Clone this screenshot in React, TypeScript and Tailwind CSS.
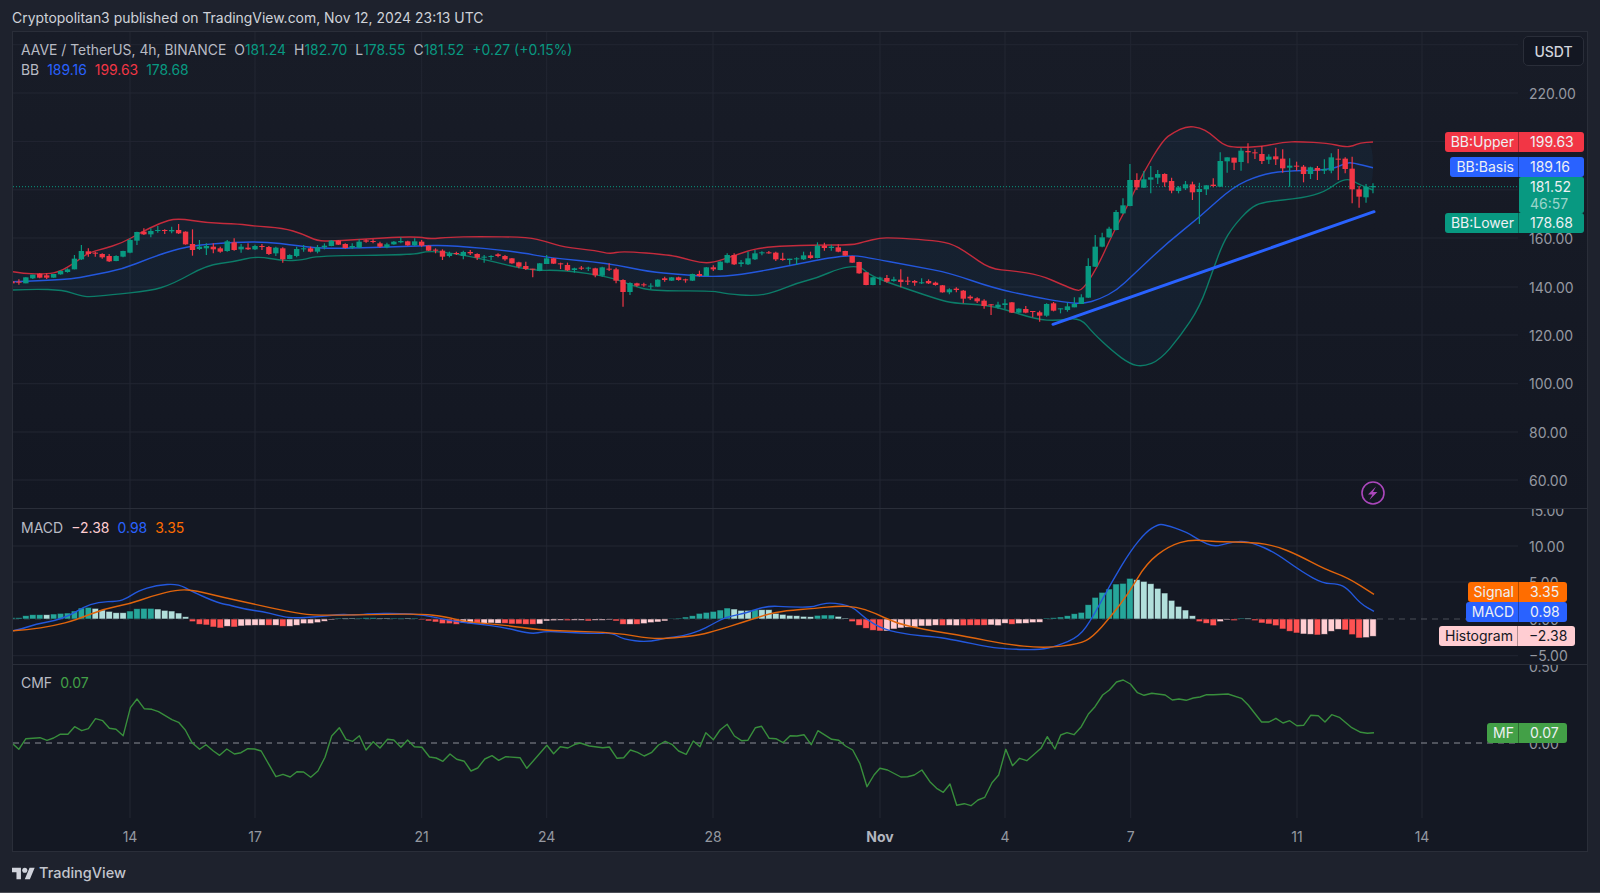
const GREEN = "#089981";
const RED = "#f23645";
const BLUE = "#2962ff";

// candles read off the chart: colour, wick top, body top, body bottom, wick bottom
// y values are 3x pixels measured from the base of each block
const candleBlocks: [number, number, string][] = [
  [200, -17, "r 242 244 250 254,r 238 245 248 254,g 232 232 250 250,g 224 224 235 237,r 219 221 233 235,r 220 226 233 237,g 222 222 233 233,g 211 213 223 224,g 205 208 216 218,g 165 176 208 208,g 135 153 178 180,r 145 154 162 170,r 155 158 160 170,r 160 162 172 176,r 162 168 184 186,g 166 168 183 184,g 152 153 170 172,g 115 120 158 160,g 95 96 122 135,r 85 95 103 105,g 85 93 103 112,g 78 90 93 98,r 88 90 93 102,g 80 90 94 100,r 72 90 100 102,r 94 95 133 134,r 88 132 150 167,g 120 140 147 150,g 130 138 145 165,r 130 140 148 160,r 140 145 155 158,g 120 124 153 155,r 115 127 150 152,g 132 140 148 158,r 130 143 148 150,g 134 138 148 150,r 132 138 140 150,r 138 141 162 165,g 140 143 160 168,r 142 145 178 188,g 163 165 177 178,g 140 147 168 172,g 135 145 147 155,r 140 145 155 157,g 135 142 155 160,g 130 137 142 148,g 120 122 138 139,r 120 122 134 135,r 130 132 144 146,g 130 138 143 147,g 118 125 143 145,r 118 121 125 128,r 118 123 126 130,r 125 130 140 143,g 128 133 142 145,g 123 125 133 134,g 112 123 127 130,r 122 124 136 137,g 115 124 136 138,r 120 125 137 140,r 136 137 152 153,r 145 149 152 160,r 148 152 170 180"],
  [220, 46, "g 95 100 108 112,r 95 99 102 105,g 92 96 108 118,r 90 96 100 105,r 100 102 113 120,g 105 110 113 128,g 106 108 111 120,r 100 103 108 112,r 105 108 118 122,r 114 115 130 131,r 125 127 140 145,r 125 138 147 150,r 146 146 149 172,g 129 130 153 154,g 105 115 132 132,r 114 115 131 132,r 128 130 133 147,r 128 135 151 153,g 143 145 150 158,r 138 143 146 150,g 140 143 146 153,r 143 145 166 172,g 140 142 167 170,r 130 146 149 153,r 143 148 182 190,r 178 180 216 260,g 187 189 216 225,r 188 190 197 200,r 188 193 196 200,g 190 197 200 207,g 178 179 200 201,r 170 175 180 185,g 171 172 182 183,r 170 172 180 182,r 176 178 181 188,g 161 162 182 183,r 152 162 168 170,g 141 142 168 169,r 136 142 148 153,g 124 125 150 151,g 100 105 128 130,r 100 105 133 135,g 120 127 132 140,g 95 115 133 135,g 90 100 118 120,g 94 97 100 106,r 93 97 100 101,r 95 98 118 123,r 98 116 120 122,g 116 116 120 134,g 112 115 117 135,g 95 106 118 120,r 95 106 114 116,g 67 77 114 115,r 68 77 84 92,g 74 80 84 92,r 73 82 95 97,r 92 93 107 108"],
  [230, 104, "r 77 78 98 99,r 95 96 130 131,r 126 127 165 166,g 141 142 165 166,g 140 143 146 165,r 135 144 155 158,g 140 148 153 155,r 118 149 156 172,r 140 152 155 165,r 150 153 158 167,g 145 157 160 162,r 148 153 160 162,r 155 158 165 167,r 165 166 187 188,g 175 178 187 193,r 172 176 180 187,r 180 182 206 220,r 196 200 205 210,r 202 205 214 219,r 208 212 228 236,r 222 223 226 255,g 215 224 232 236,g 207 220 225 237,r 216 217 248 249,g 235 236 248 249,r 228 237 248 250,r 243 243 246 262,r 242 247 257 275,g 220 222 257 260,r 216 220 242 244,g 235 235 238 250,g 218 229 240 245,g 202 222 232 232,g 193 202 222 222"],
  [110, 138, "g 445 468 563 564,g 375 410 470 471,g 368 382 410 412,g 350 356 382 383,g 300 306 360 361,g 265 286 310 312,g 162 210 288 289,r 190 210 232 240,g 183 208 233 234,g 168 202 209 250,g 180 192 203 222,r 190 192 217 230,r 203 213 242 250,g 228 232 243 250,g 213 223 235 240,r 215 223 247 270,g 218 237 246 342,g 226 226 238 255,r 205 224 228 232,g 127 153 230 231,g 142 142 154 188,r 143 143 158 180,g 113 122 156 182,r 100 123 127 160,r 118 127 130 147,r 108 132 153 162,g 133 140 149 162,r 113 139 148 165,r 118 146 175 188,g 145 167 173 230,r 155 167 170 182,r 165 170 192 217,g 170 172 192 207,r 168 174 182 210,g 148 177 182 192,g 130 142 182 190,r 117 146 148 210,r 142 146 177 190,r 140 176 238 280,r 228 238 260 293,g 222 230 262 278,g 220 228 232 250"],
];

const candles = candleBlocks.flatMap(([base, k0, rows]) =>
  rows.split(",").map((row, i) => {
    const [c, hi, top, bot, lo] = row.split(" ");
    return {
      x: 130 + 6.944 * (k0 + i),
      up: c === "g",
      hi: base + +hi / 3,
      top: base + +top / 3,
      bot: base + +bot / 3,
      lo: base + +lo / 3,
    };
  }),
);

// round the corners of a hand-read line: quadratic curves through the midpoints
function smooth(points: string) {
  const p = points.split(" ").map((s) => s.split(",").map(Number));
  let d = `M${p[0][0]} ${p[0][1]}`;
  for (let i = 1; i < p.length - 1; i++) {
    const mx = (p[i][0] + p[i + 1][0]) / 2;
    const my = (p[i][1] + p[i + 1][1]) / 2;
    d += `Q${p[i][0]} ${p[i][1]} ${mx} ${my}`;
  }
  const last = p[p.length - 1];
  return d + `L${last[0]} ${last[1]}`;
}

const bbUpper =
  "13,271.7 23,273.7 47,274 60,271.7 75,262.7 88,252.7 103,249 122,243 140,233 160,223 177,218 207,223 240,224 253,226 283,228 303,234 317,241 333,241 367,239 400,237 420,237 430,239 450,237 477,236.7 527,237 547,241.7 563,247 597,250.7 610,254 622,251 670,255 683,258 700,262.7 713,262.7 733,256 760,247 813,245 853,245 863,242 880,238 893,237.7 927,240 950,242.7 967,252.7 990,269 1013,270.7 1040,275 1063,285 1075,290 1082,290.7 1097,268 1113,233 1127,207 1143,173 1163,140 1173,132.7 1187,126 1200,127.7 1210,133 1222,144 1233,147.7 1263,146.7 1283,142 1300,141.7 1327,143 1345,147 1353,146 1360,142.7 1373,142";
const bbBasis =
  "13,281.7 67,280 93,275 123,269 150,258 180,248 207,244 260,241 300,246 327,249 417,246 450,245 517,251.7 550,258 607,263 650,272 677,274 710,277 740,275 783,267 833,257 853,255.5 863,256.7 917,266.7 950,273 993,288 1033,296.7 1063,302 1083,304 1100,299 1117,290 1133,275 1167,243 1200,216.7 1233,186.7 1260,175 1283,171 1330,170 1347,162.7 1353,162.7 1373,167.7";
const bbLower =
  "13,290 33,289 63,290 80,295.7 90,297 110,294.7 150,291 173,284 207,265 233,262 257,256 283,261 303,260 317,255.7 413,255 427,251 450,252.7 483,259 530,270.7 563,270 610,276.7 633,286 653,291 713,290.7 727,294 755,296 773,292.7 797,283 817,278 840,268 860,265.7 870,276 907,289 940,300 953,303 983,305 1000,308 1037,319.5 1057,320.7 1080,317.3 1093,333 1113,351.7 1130,364 1143,366.7 1160,360 1180,336.7 1200,306.7 1213,270 1223,243 1233,226.7 1250,208 1263,202 1303,198 1325,191.7 1340,180.7 1350,179 1358,184 1373,190";
const bbFill = bbUpper + " " + bbLower.split(" ").reverse().join(" ");

const macdLine =
  "13,630.7 22,629 36,624 54,621 71,615 83,607.3 98,602 118,601.3 127,598.3 138,591 156,585.3 178,583.7 192,591.7 219,603.3 228,604.7 245.5,609.3 263,611.7 277,615 290,618.3 321,616.7 339,614.3 357,615 370,613.7 397,613.3 424,614.7 451,621 478,624 504,627.3 531,634.3 545,631.3 567,632.3 594,633.7 612,632.7 623,639.3 647,642.3 670,637.3 683,636 700,630.7 711,625 722,619 731,616 745,613.3 767,605.7 789,607 812,607.3 820.5,604 832,602.7 852,606 865,618.3 883,629.3 910,635 937,637 954.5,640 990,647.3 1008,649 1039,650 1057,646 1079.5,636.7 1093,616.7 1111,583.3 1131,550 1146.4,531.7 1157.6,524.7 1164,524.3 1186.6,532 1200,540.7 1214,547 1229,542.7 1242,541 1253.6,543.3 1273.7,551.7 1302.7,572.3 1322.8,583.3 1338.4,584 1347.3,588.3 1360.7,604 1374,611.3";
const signalLine =
  "13,630.7 27,630 54,625.7 76,620 103,609 129.5,604 152,596 178.6,589.3 196,590.7 223,597.3 254.5,604.3 290,612 312.5,615.3 352.7,615 420,613.7 446,616.7 464,621.7 504.5,625 540,630 567,631 616,632.7 652,639 674,638 700,635 718,630 744.6,621.7 767,614.3 785,610.7 816,608.3 838,606 856,606.7 874,612.7 896.4,623.3 923,629.3 968,636.7 1003.6,644 1043.8,648.3 1079.5,644 1093,636.7 1110.7,616.7 1128.6,593.3 1146.4,563.3 1168.8,546 1191,539.3 1213.4,541.7 1253.6,542.3 1276,546 1298,555 1325,569.3 1347.3,577.3 1374,594.3";

// histogram, one per candle from k=-17: d dark teal, l light teal, r red, p pink (3x px)
const hist =
  "d4 d4 d10 d13 d13 l13 d15 d17 d18 d24 d33 d35 l32 l27 l23 l19 l19 d24 d31 d32 d32 l30 l26 l24 l18 l7 r-8 r-16 r-18 r-24 r-27 p-22 r-24 p-21 p-20 p-19 p-19 r-19 p-19 r-22 p-22 p-19 p-14 p-14 p-11 p-7 p-3 d3 l3 l3 d3 d4 d4 l3 l3 d3 d3 l3 d3 r-3 r-6 r-9 r-14 r-14 r-16 p-11 p-13 r-14 p-13 p-12 p-13 r-13 r-15 r-15 r-16 r-16 p-15 p-6 p-5 p-4 r-5 p-4 p-4 r-6 p-4 p-4 p-3 r-6 r-16 p-16 r-16 p-14 p-11 p-9 p-6 d2 d3 d6 d10 d17 d20 d23 d27 d33 l30 l26 l26 d28 l28 l28 l17 l14 l11 l10 l8 l7 d11 d12 d12 l8 l3 r-8 r-19 r-28 r-34 r-36 p-36 p-30 p-27 p-25 p-24 p-21 p-21 p-19 r-20 p-19 p-20 r-20 r-19 r-19 r-19 p-18 p-20 p-13 r-16 p-14 p-13 p-11 p-10 d3 d4 d6 d10 d16 d20 d43 d65 d80 d90 d105 d107 d122 l118 l113 l106 l92 l78 l56 l38 l27 l10 r-8 r-13 r-20 p-8 p-3 r-5 d3 l3 r-5 r-12 r-15 r-20 r-30 r-37 r-42 p-45 p-46 r-48 p-46 p-37 p-31 r-33 r-47 r-57 p-56 p-52"
    .split(" ")
    .map((s, i) => ({ x: 130 + 6.944 * (i - 17), type: s[0], h: +s.slice(1) / 3 }));

const histColor: Record<string, string> = { d: "#26a69a", l: "#b2dfdb", r: "#ff5252", p: "#ffcdd2" };

const cmfLine =
  "13,744 18.8,749.3 25.9,738.7 40,737.7 47,740.3 53.6,738 60,734.3 67.9,734.3 74.6,726.7 81.7,730.7 88.4,728.7 95.5,718.7 102.7,720.7 109.4,728.3 116,729.3 123.2,735.7 130.4,707.7 137,699 144.2,708.7 151.8,709.3 158.5,711.7 171.9,719.7 178.6,722.3 185.3,730 192,742.7 199.6,749.3 206,744.7 213.4,751 219.6,755.3 226.8,749 234.4,754 241,752.7 247.8,748.7 254.5,749 261.2,751 275.9,776.7 283,774.3 290.2,777 296.9,771.7 303.6,772 310.7,777.3 317.9,771 325,757.3 331.7,736 339.3,727.7 346,739.3 352.7,741.3 359.4,735.7 366,750 373.2,741.7 380,748 387.5,739.3 393.8,740 400.9,747.3 407.6,740 414.3,746.7 421.9,747.3 429.5,757 436.2,758 442.9,761.3 450,754 456.7,759.3 464.3,761.3 471,771 477.7,768 484.8,759 492,755.7 498.7,760.3 505.8,756.7 520,757.7 526.8,768.3 546.9,745.3 553.6,753.7 560.3,746.7 567.9,748 575,744.3 580.4,743 589.3,746 602.7,747.7 609.4,747 617,758.3 623.7,757.7 630.4,750 637.5,752.3 644.2,756 651.8,752.3 658.5,745 665.2,741.3 671.9,744.3 678.6,751 686.2,754.3 693.3,741 700,746.7 705.8,732.7 713.4,739.7 720,730 727.2,724.3 734.4,736 741.5,740.7 747.8,740.3 755.4,727.7 761.6,726.3 769.2,738.3 775.9,738.7 783,742.7 790.2,735.7 796.9,736 804,734.7 811.2,744.7 817.9,730.7 831.7,739.3 838.8,740.3 845.5,746 852.7,750 859.8,763.3 867,786.7 874,775 879.9,768.3 887.5,770 900.9,777 907.6,776.7 914.3,775 921.9,770 929.9,781.7 936.6,788.3 943.3,792.3 950,784 956.7,805.3 964.3,803.7 971,805.7 978,800 984.8,797.3 992,782.7 998.7,775 1005.8,749.3 1012.5,765.7 1019.6,758.3 1026.8,760.7 1041,748.3 1047.3,736.7 1054.9,749 1060.7,735 1067,732.7 1074,734.7 1081.3,726.7 1088.4,714 1095,706.7 1102.7,695 1109.4,690 1116.5,682 1123.2,680 1130.4,684 1137.5,692.7 1144,695.3 1151.8,693.3 1165.2,695 1172.3,700 1179,699 1186.2,700.3 1193.3,698 1200,697 1206.7,694.7 1213.4,694.7 1228,694 1241.5,698.3 1248.2,705 1261.6,722 1269,722 1275.9,718.3 1283,723 1289.7,720.7 1296.9,725.7 1303.6,725.3 1310.7,715.3 1318.3,715.7 1325,722 1331.7,714.7 1339.3,717.3 1351.8,727.7 1360.7,732.3 1367.4,733.3 1374,732.7";

const dayLines = [130, 255, 421.7, 546.7, 713, 880, 1005, 1130.7, 1297, 1422];
const timeLabels = [
  { x: 130, text: "14" },
  { x: 255, text: "17" },
  { x: 421.7, text: "21" },
  { x: 546.7, text: "24" },
  { x: 713, text: "28" },
  { x: 880, text: "Nov", bold: true },
  { x: 1005, text: "4" },
  { x: 1130.7, text: "7" },
  { x: 1297, text: "11" },
  { x: 1422, text: "14" },
];

const GRID = "#222632";

type Tick = { y: number; text?: string };

function Pane({
  top,
  height,
  ticks,
  lines,
  children,
  overlay,
}: {
  top: number;
  height: number;
  ticks: Tick[];
  lines?: number[];
  children: React.ReactNode;
  overlay?: React.ReactNode;
}) {
  return (
    <div className="relative flex overflow-hidden" style={{ height }}>
      <svg width={1505} height={height} viewBox={`13 ${top} 1505 ${height}`} className="shrink-0">
        {dayLines.map((x) => (
          <line key={x} x1={x} x2={x} y1={top} y2={top + height} stroke={GRID} strokeWidth={1} />
        ))}
        {(lines ?? ticks.map((t) => t.y)).map((y) => (
          <line key={y} x1={13} x2={1518} y1={y} y2={y} stroke={GRID} strokeWidth={1} />
        ))}
        {children}
      </svg>
      <div className="relative flex-1">
        {ticks.map(
          (t) =>
            t.text && (
              <span
                key={t.text}
                className="absolute left-[11px] text-[14px] leading-[20px] text-[#9598a1]"
                style={{ top: t.y - top - 9.5 }}
              >
                {t.text}
              </span>
            ),
        )}
      </div>
      {overlay}
    </div>
  );
}

function Tag({
  top,
  right,
  label,
  value,
  valueWidth,
  bg,
  dark,
}: {
  top: number;
  right: number;
  label: string;
  value: string;
  valueWidth: number;
  bg: string;
  dark?: boolean;
}) {
  return (
    <div
      className={`absolute flex h-[20px] rounded-[3px] text-[14px] leading-[20px] ${dark ? "text-[#131722]" : "text-[#eef0f4]"}`}
      style={{ top, right, backgroundColor: bg }}
    >
      <span className="border-r border-black/30 pl-[6px] pr-[4px]">{label}</span>
      <span className="pl-[11px]" style={{ width: valueWidth }}>
        {value}
      </span>
    </div>
  );
}

export default function App() {
  return (
    <div className="flex h-[893px] w-[1600px] flex-col overflow-hidden bg-[#1e222d] font-[Inter,sans-serif] text-[#b8bbc4]">
      {/* published by line */}
      <div className="flex h-[31px] shrink-0 items-center pl-[12px] pt-[5px] text-[13.95px] text-[#cfd2d9]">
        Cryptopolitan3 published on TradingView.com, Nov 12, 2024 23:13 UTC
      </div>

      {/* chart frame */}
      <div className="relative mx-[12px] h-[821px] shrink-0 border border-[#2a2e39] bg-[#141823]">
        {/* price pane */}
        <div className="border-b border-[#2a2e39] bg-gradient-to-b from-[#181c27] to-[#131722]">
          <Pane
            top={32}
            height={476}
            ticks={[
              { y: 44.7 },
              { y: 93, text: "220.00" },
              { y: 141.4 },
              { y: 189.8 },
              { y: 238, text: "160.00" },
              { y: 287, text: "140.00" },
              { y: 335, text: "120.00" },
              { y: 383.7, text: "100.00" },
              { y: 432, text: "80.00" },
              { y: 480, text: "60.00" },
            ]}
            overlay={
              <>
                <div className="absolute left-[8px] top-[8px] text-[13.9px] leading-[20px]">
                  <div className="flex">
                    <span>AAVE / TetherUS, 4h, BINANCE</span>
                    <span className="ml-[8px]">O</span>
                    <span className="text-[#089981]">181.24</span>
                    <span className="ml-[8px]">H</span>
                    <span className="text-[#089981]">182.70</span>
                    <span className="ml-[8px]">L</span>
                    <span className="text-[#089981]">178.55</span>
                    <span className="ml-[8px]">C</span>
                    <span className="text-[#089981]">181.52</span>
                    <span className="ml-[8px] text-[#089981]">+0.27 (+0.15%)</span>
                  </div>
                  <div className="flex gap-[8px]">
                    <span>BB</span>
                    <span className="text-[#2962ff]">189.16</span>
                    <span className="text-[#f23645]">199.63</span>
                    <span className="text-[#089981]">178.68</span>
                  </div>
                </div>
                <div className="absolute right-[3px] top-[4px] flex h-[30px] w-[61px] items-center justify-center rounded-[5px] border border-[#2a2e39] bg-[#131722] text-[14px] font-medium text-[#d1d4dc]">
                  USDT
                </div>
              </>
            }
          >
            <path d={smooth(bbFill)} fill="#2196f3" fillOpacity={0.06} />
            <path d={smooth(bbUpper)} fill="none" stroke="#c42b3c" strokeWidth={1.4} />
            <path d={smooth(bbBasis)} fill="none" stroke="#2357dd" strokeWidth={1.4} />
            <path d={smooth(bbLower)} fill="none" stroke="#0c7c68" strokeWidth={1.4} />
            <line x1={13} x2={1518} y1={186.7} y2={186.7} stroke={GREEN} strokeWidth={1} strokeDasharray="1 2" />
            {candles.map((c) => (
              <g key={c.x} fill={c.up ? GREEN : RED} stroke={c.up ? GREEN : RED}>
                <line x1={c.x} x2={c.x} y1={c.hi} y2={c.lo} strokeWidth={1.2} />
                <rect x={c.x - 2.7} y={c.top} width={5.4} height={Math.max(c.bot - c.top, 1)} stroke="none" />
              </g>
            ))}
            <line x1={1053} y1={324.3} x2={1374} y2={211.7} stroke={BLUE} strokeWidth={3} strokeLinecap="round" />
            <circle cx={1373} cy={493} r={11} fill="none" stroke="#ab47bc" strokeWidth={1.6} />
            <path d="M1376 486.5 l-8 8 h4.4 l-3 5.5 l8 -8 h-4.4 z" fill="#ab47bc" />
          </Pane>
        </div>

        {/* macd pane */}
        <div className="border-b border-[#2a2e39]">
          <Pane
            top={509}
            height={155}
            ticks={[
              { y: 510, text: "15.00" },
              { y: 546, text: "10.00" },
              { y: 582, text: "5.00" },
              { y: 619, text: "0.00" },
              { y: 655.7, text: "−5.00" },
            ]}
            lines={[546, 582, 655.7]}
            overlay={
              <div className="absolute left-[8px] top-[9px] flex gap-[8px] text-[14px] leading-[20px]">
                <span>MACD</span>
                <span className="text-[#ffcdd2]">−2.38</span>
                <span className="text-[#2962ff]">0.98</span>
                <span className="text-[#ff6d00]">3.35</span>
              </div>
            }
          >
            <line x1={13} x2={1518} y1={619} y2={619} stroke="#4a4e59" strokeWidth={1} strokeDasharray="6 5" />
            {hist.map((b) => (
              <rect
                key={b.x}
                x={b.x - 3.2}
                y={b.h > 0 ? 619 - b.h : 619}
                width={6.4}
                height={Math.abs(b.h)}
                fill={histColor[b.type]}
                stroke="#131722"
                strokeOpacity={0.7}
                strokeWidth={0.8}
              />
            ))}
            <path d={smooth(macdLine)} fill="none" stroke="#2358dd" strokeWidth={1.4} />
            <path d={smooth(signalLine)} fill="none" stroke="#e0640c" strokeWidth={1.4} />
          </Pane>
        </div>

        {/* cmf pane */}
        <Pane
          top={665}
          height={153}
          ticks={[
            { y: 666.7, text: "0.50" },
            { y: 743, text: "0.00" },
          ]}
          lines={[]}
          overlay={
            <div className="absolute left-[8px] top-[8px] flex gap-[8px] text-[14px] leading-[20px]">
              <span>CMF</span>
              <span className="text-[#43a047]">0.07</span>
            </div>
          }
        >
          <line x1={13} x2={1518} y1={743} y2={743} stroke="#8a8d96" strokeWidth={1} strokeDasharray="6 5" />
          <polyline points={cmfLine} fill="none" stroke="#388e3c" strokeWidth={1.4} strokeLinejoin="round" />
        </Pane>

        {/* time axis */}
        <div className="relative h-[33px] text-[14px] leading-[20px] text-[#9598a1]">
          {timeLabels.map((t) => (
            <span
              key={t.x}
              className={`absolute top-[9px] -translate-x-1/2 ${t.bold ? "font-bold text-[#b2b5be]" : ""}`}
              style={{ left: t.x - 13 }}
            >
              {t.text}
            </span>
          ))}
        </div>

        {/* price tags over the axis */}
        <Tag top={100} right={3} label="BB:Upper" value="199.63" valueWidth={65} bg="#f23645" />
        <Tag top={125} right={3} label="BB:Basis" value="189.16" valueWidth={65} bg="#2962ff" />
        <div className="absolute left-[1506px] top-[145px] flex h-[36px] w-[65px] flex-col rounded-[2px] bg-[#089981] pl-[11px] pt-px text-[14px] leading-[17px] text-[#eef0f4]">
          <span>181.52</span>
          <span className="text-white/60">46:57</span>
        </div>
        <Tag top={181} right={3} label="BB:Lower" value="178.68" valueWidth={65} bg="#089981" />
        <Tag top={550} right={20} label="Signal" value="3.35" valueWidth={48} bg="#ff6d00" />
        <Tag top={570} right={20} label="MACD" value="0.98" valueWidth={48} bg="#2962ff" />
        <Tag top={594} right={12} label="Histogram" value="−2.38" valueWidth={57} bg="#ffcdd2" dark />
        <Tag top={691} right={20} label="MF" value="0.07" valueWidth={48} bg="#43a047" />
      </div>

      {/* footer */}
      <div className="flex flex-1 items-center gap-[4px] border-b border-[#4a4d55] pl-[12px] pt-[2px]">
        <svg width="23" height="13" viewBox="0 4 36 18" fill="#d1d4dc">
          <path d="M14 22H7V11H0V4h14v18zM28 22h-8l7.5-18h8L28 22z" />
          <circle cx="20" cy="8" r="4" />
        </svg>
        <span className="text-[14.5px] font-medium text-[#c3c6ce]">TradingView</span>
      </div>
    </div>
  );
}
